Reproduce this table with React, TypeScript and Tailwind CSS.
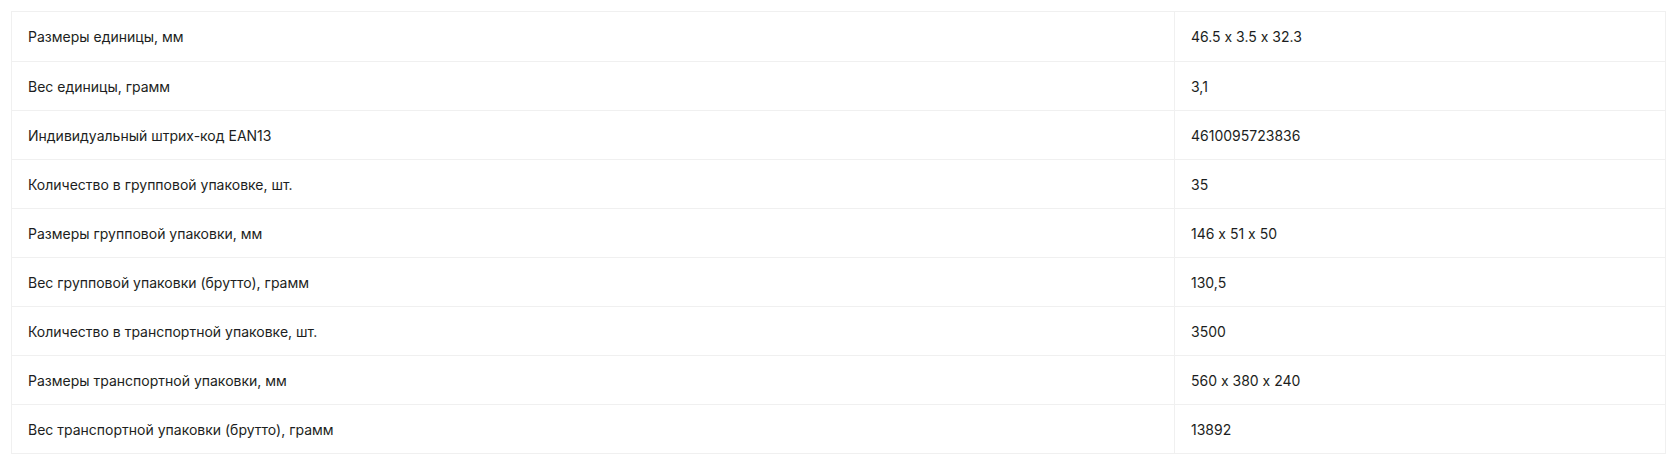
import React from "react";

const rows: [string, string][] = [
  ["Размеры единицы, мм", "46.5 x 3.5 x 32.3"],
  ["Вес единицы, грамм", "3,1"],
  ["Индивидуальный штрих-код EAN13", "4610095723836"],
  ["Количество в групповой упаковке, шт.", "35"],
  ["Размеры групповой упаковки, мм", "146 x 51 x 50"],
  ["Вес групповой упаковки (брутто), грамм", "130,5"],
  ["Количество в транспортной упаковке, шт.", "3500"],
  ["Размеры транспортной упаковки, мм", "560 x 380 x 240"],
  ["Вес транспортной упаковки (брутто), грамм", "13892"],
];

export default function App() {
  return (
    <div
      className="w-[1680px] h-[465px] bg-white pt-[11px] pl-[11px] [font-feature-settings:'calt'_0] font-['Inter','Noto_Sans',sans-serif]"
    >
      <div className="w-[1655px] border border-[#f0f0f0]">
        {rows.map(([k, v], i) => (
          <div
            key={i}
            className={`grid grid-cols-[1163px_1fr] h-[49px] ${i > 0 ? "border-t border-[#f0f0f0]" : ""}`}
          >
            <div className="flex items-center pl-[16px] text-[14px] text-[#1c1e21] border-r border-[#f0f0f0]">{k}</div>
            <div className="flex items-center pl-[16px] text-[14px] text-[#1c1e21]">{v}</div>
          </div>
        ))}
      </div>
    </div>
  );
}
